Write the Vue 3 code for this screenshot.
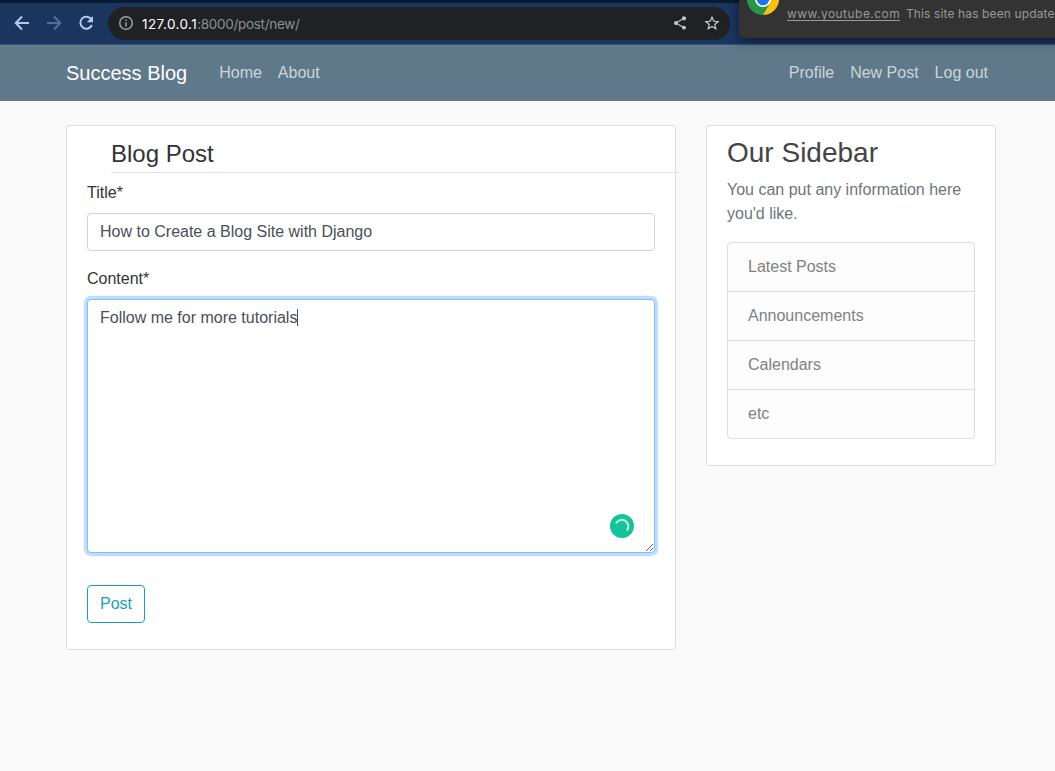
<script setup>
import { ref } from 'vue'

const title = ref('How to Create a Blog Site with Django')
const content = ref('Follow me for more tutorials')
const items = ['Latest Posts', 'Announcements', 'Calendars', 'etc']
</script>

<template>
  <div class="screen">
    <div class="toolbar">
      <svg class="tool" viewBox="0 0 20 20"><path d="M17 10H4M10 3.5L3.7 10l6.3 6.5" /></svg>
      <svg class="tool dim" viewBox="0 0 20 20"><path d="M3 10h13M10 3.5l6.3 6.5-6.3 6.5" /></svg>
      <svg class="tool reload" viewBox="0 0 20 20">
        <path d="M15.4 6.4A6 6 0 1 0 15.9 12" />
        <path class="head" d="M17 3v6.2h-6.2z" />
      </svg>
      <div class="address">
        <svg class="info" viewBox="0 0 16 16">
          <circle cx="8" cy="8" r="6.3" />
          <path d="M8 7.2v4.2M8 4.4v1.6" />
        </svg>
        <span class="url"><b>127.0.0.1</b>:8000/post/new/</span>
        <svg class="share" viewBox="0 0 24 24"><path d="M18 16.08c-.76 0-1.44.3-1.96.77L8.91 12.7a3.3 3.3 0 0 0 0-1.4l7.05-4.11A3 3 0 1 0 15 5c0 .24.04.47.09.7L8.04 9.81a3 3 0 1 0 0 4.38l7.12 4.16c-.05.21-.08.43-.08.65a2.92 2.92 0 1 0 2.92-2.92z" /></svg>
        <svg class="star" viewBox="1.5 1.2 21 21"><path d="M22 9.24l-7.19-.62L12 2 9.19 8.63 2 9.24l5.46 4.73L5.82 21 12 17.27 18.18 21l-1.63-7.03zM12 15.4l-3.76 2.27 1-4.28-3.32-2.88 4.38-.38L12 6.1l1.71 4.04 4.38.38-3.32 2.88 1 4.28z" /></svg>
      </div>
    </div>

    <div class="toast">
      <svg class="chrome" viewBox="0 0 32 32">
        <path d="M16 16L2.14 8A16 16 0 0 1 29.86 8z" fill="#ea4335" />
        <path d="M16 16L29.86 8A16 16 0 0 1 16 32z" fill="#fbc116" />
        <path d="M2.14 8A16 16 0 0 0 16 32L23 20 16 16z" fill="#289547" />
        <circle cx="16" cy="16" r="8" fill="#fff" />
        <circle cx="16" cy="16" r="6.3" fill="#1a73e8" />
      </svg>
      <span class="site">www.youtube.com</span>
      <span class="msg">This site has been update</span>
    </div>

    <nav class="navbar">
      <div class="container">
        <a class="brand">Success Blog</a>
        <a>Home</a>
        <a>About</a>
        <span class="spacer"></span>
        <a>Profile</a>
        <a>New Post</a>
        <a>Log out</a>
      </div>
    </nav>

    <main class="container row">
      <form class="card main-card">
        <div class="legend">Blog Post</div>
        <label for="title">Title*</label>
        <input id="title" v-model="title" class="field" spellcheck="false" />
        <label for="content">Content*</label>
        <div class="area">
          <textarea id="content" v-model="content" class="field" spellcheck="false"></textarea>
          <span class="caret"></span>
          <svg class="badge" viewBox="0 0 24 24">
            <circle cx="12" cy="12" r="12" fill="#15c39a" />
            <path d="M6.4 8.8A6.3 6.3 0 0 1 17.3 15.8" fill="none" stroke="#c5f0e5" stroke-width="2" stroke-linecap="round" />
          </svg>
        </div>
        <button type="button" class="post">Post</button>
      </form>
      <aside class="card side-card">
        <h3>Our Sidebar</h3>
        <p>You can put any information here you'd like.</p>
        <ul>
          <li v-for="item in items" :key="item">{{ item }}</li>
        </ul>
      </aside>
    </main>
  </div>
</template>

<style>
body {
  background: #fafafa;
  overflow: hidden;
}
</style>

<style scoped>
* {
  box-sizing: border-box;
}
.screen {
  position: relative;
  width: 1055px;
  height: 771px;
  overflow: hidden;
  background: #fafafa;
  color: #333;
  font: 16px/24px "Liberation Sans", Arial, sans-serif;
}
.toolbar {
  display: flex;
  align-items: center;
  gap: 12px;
  height: 45px;
  padding: 0 12px;
  border-top: 3px solid #0b1a33;
  border-bottom: 1px solid #35517a;
  background: #1a355e;
}
.toolbar svg {
  flex: none;
}
.tool {
  position: relative;
  top: -0.5px;
  width: 20px;
  height: 20px;
  fill: none;
  stroke: #b4c9ec;
  stroke-width: 2;
}
.dim {
  stroke: #546f98;
}
.reload .head {
  fill: #b4c9ec;
  stroke: none;
}
.address {
  display: flex;
  align-items: center;
  width: 622px;
  height: 33px;
  padding: 0 10px;
  border-radius: 17px;
  background: #202124;
}
.info {
  position: relative;
  top: -0.5px;
  width: 16px;
  height: 16px;
  fill: none;
  stroke: #9aa0a6;
  stroke-width: 1.5;
}
.url {
  flex: 1;
  margin-left: 8px;
  color: #8c8f93;
  font: 13.5px/20px Inter, sans-serif;
  letter-spacing: -0.3px;
}
.url b {
  color: #fff;
  font-weight: 400;
  letter-spacing: 0.42px;
}
.share,
.star {
  position: relative;
  top: -0.5px;
  width: 16px;
  height: 16px;
  fill: #c6c7c9;
}
.share {
  margin-right: 16px;
}
.toast {
  position: absolute;
  z-index: 2;
  top: -20px;
  left: 739px;
  display: flex;
  align-items: flex-start;
  width: 340px;
  height: 58px;
  padding-left: 8px;
  border-radius: 5px;
  background: #333;
  box-shadow: 0 3px 12px rgba(0, 0, 0, 0.45);
  color: #9a9894;
  font: 12px/16px Inter, sans-serif;
  white-space: nowrap;
}
.chrome {
  flex: none;
  width: 32px;
  height: 32px;
  margin-top: 3px;
}
.site {
  width: 113px;
  margin: 27px 6px 0 8px;
  border-bottom: 1px solid #9a9894;
  line-height: 13px;
  letter-spacing: 0.47px;
}
.msg {
  margin-top: 27px;
  line-height: 13px;
  letter-spacing: 0.12px;
}
.navbar {
  height: 56px;
  background: #5f788a;
}
.container {
  display: flex;
  width: 930px;
  margin-left: 66px;
}
.navbar .container {
  align-items: center;
  height: 56px;
}
.navbar a {
  padding: 0 8px;
  color: #cbd5db;
}
.navbar .brand {
  padding: 0;
  margin-right: 24px;
  color: #fff;
  font-size: 20px;
}
.spacer {
  flex: 1;
}
.row {
  align-items: flex-start;
  gap: 30px;
  margin-top: 24px;
}
.card {
  padding: 10px 20px;
  border: 1px solid #ddd;
  border-radius: 3px;
  background: #fff;
}
.main-card {
  width: 610px;
  height: 525px;
}
.legend {
  width: 568px;
  height: 37px;
  margin: 0 0 8px 24px;
  border-bottom: 1px solid #dee2e6;
  font-size: 24px;
  line-height: 36px;
}
label {
  display: block;
  margin-bottom: 8px;
}
.field {
  display: block;
  width: 100%;
  height: 38px;
  margin: 0 0 16px;
  padding: 6px 12px;
  border: 1px solid #ced4da;
  border-radius: 4px;
  outline: 0;
  background: #fff;
  color: #495057;
  font: inherit;
}
.area {
  position: relative;
  height: 254px;
}
.area .field {
  height: 254px;
  border-color: #80bdff;
  box-shadow: 0 0 0 3.2px #bfdeff;
}
.caret {
  position: absolute;
  top: 10px;
  left: 210px;
  width: 1px;
  height: 17px;
  background: #495057;
}
.badge {
  position: absolute;
  top: 215px;
  left: 523px;
  width: 24px;
  height: 24px;
}
.post {
  width: 58px;
  height: 38px;
  margin-top: 32px;
  padding: 6px 0;
  border: 1px solid #17a2b8;
  border-radius: 4px;
  background: #fff;
  color: #17a2b8;
  font: inherit;
}
.side-card {
  width: 290px;
  height: 341px;
}
h3 {
  margin: 0 0 8px;
  color: #444;
  font-size: 28px;
  font-weight: 400;
  line-height: 33.6px;
}
p {
  margin: 0 0 16px;
  color: #6c757d;
}
ul {
  margin: 0;
  padding: 0;
  overflow: hidden;
  border: 1px solid #dcdddd;
  border-radius: 4px;
  background: #fdfdfe;
  list-style: none;
}
li {
  height: 49px;
  padding: 12px 20px;
  border-bottom: 1px solid #dcdddd;
  color: #818182;
}
li:last-child {
  height: 48px;
  border-bottom: 0;
}
</style>
